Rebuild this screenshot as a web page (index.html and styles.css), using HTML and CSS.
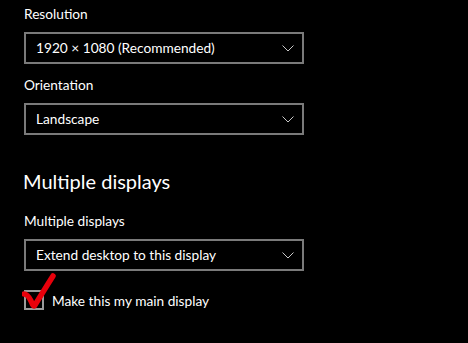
FILE: index.html
```html
<!DOCTYPE html>
<html lang="en">
<head>
    <meta charset="UTF-8">
    <title>Display settings</title>
    <link rel="stylesheet" href="styles.css">
</head>
<body>
    <div class="panel">
        <div class="field">
            <div class="label">Resolution</div>
            <div class="select">
                <span>1920 × 1080 (Recommended)</span>
                <svg class="chevron" width="12" height="7" viewBox="0 0 12 7"><path d="M0.5 0.5 L6 6 L11.5 0.5" fill="none" stroke="#c8c8c8" stroke-width="1"/></svg>
            </div>
        </div>

        <div class="field">
            <div class="label">Orientation</div>
            <div class="select">
                <span>Landscape</span>
                <svg class="chevron" width="12" height="7" viewBox="0 0 12 7"><path d="M0.5 0.5 L6 6 L11.5 0.5" fill="none" stroke="#c8c8c8" stroke-width="1"/></svg>
            </div>
        </div>

        <h2>Multiple displays</h2>

        <div class="field">
            <div class="label">Multiple displays</div>
            <div class="select">
                <span>Extend desktop to this display</span>
                <svg class="chevron" width="12" height="7" viewBox="0 0 12 7"><path d="M0.5 0.5 L6 6 L11.5 0.5" fill="none" stroke="#c8c8c8" stroke-width="1"/></svg>
            </div>
        </div>

        <div class="check-row">
            <div class="checkbox"></div>
            <span>Make this my main display</span>
            <!-- red hand-drawn tick on top -->
            <svg class="scribble" width="40" height="42" viewBox="0 0 40 42">
                <path d="M2 21 C5 21 7 24 9 28 C11 33 12 34 13 32 C18 24 24 14 31 3" fill="none" stroke="#e8000b" stroke-width="5.5" stroke-linecap="round" stroke-linejoin="round"/>
            </svg>
        </div>
    </div>
</body>
</html>
```

FILE: styles.css
```css
body {
    margin: 0;
    background: #000;
    color: #fff;
    font-family: Lato, "Noto Sans", sans-serif;
    font-size: 13.7px;
}

.panel {
    padding: 4px 0 0 24px;
}

.field {
    margin-bottom: 11px;
}

.label {
    line-height: 20px;
    margin-bottom: 8px;
}

.select {
    box-sizing: border-box;
    width: 280px;
    height: 32px;
    border: 2px solid #7a7a7a;
    display: flex;
    align-items: center;
    justify-content: space-between;
    padding: 0 8px 0 10px;
}

.select span {
    line-height: 20px;
}

h2 {
    font-size: 20px;
    font-weight: normal;
    line-height: 28px;
    margin: 32px 0 16px -1px;
}

.check-row {
    position: relative;
    display: flex;
    align-items: center;
    gap: 8px;
    margin-top: 19px;
}

.checkbox {
    box-sizing: border-box;
    width: 20px;
    height: 20px;
    border: 2px solid #9a9a9a;
}

.scribble {
    position: absolute;
    left: -2px;
    top: -17px;
}
```
